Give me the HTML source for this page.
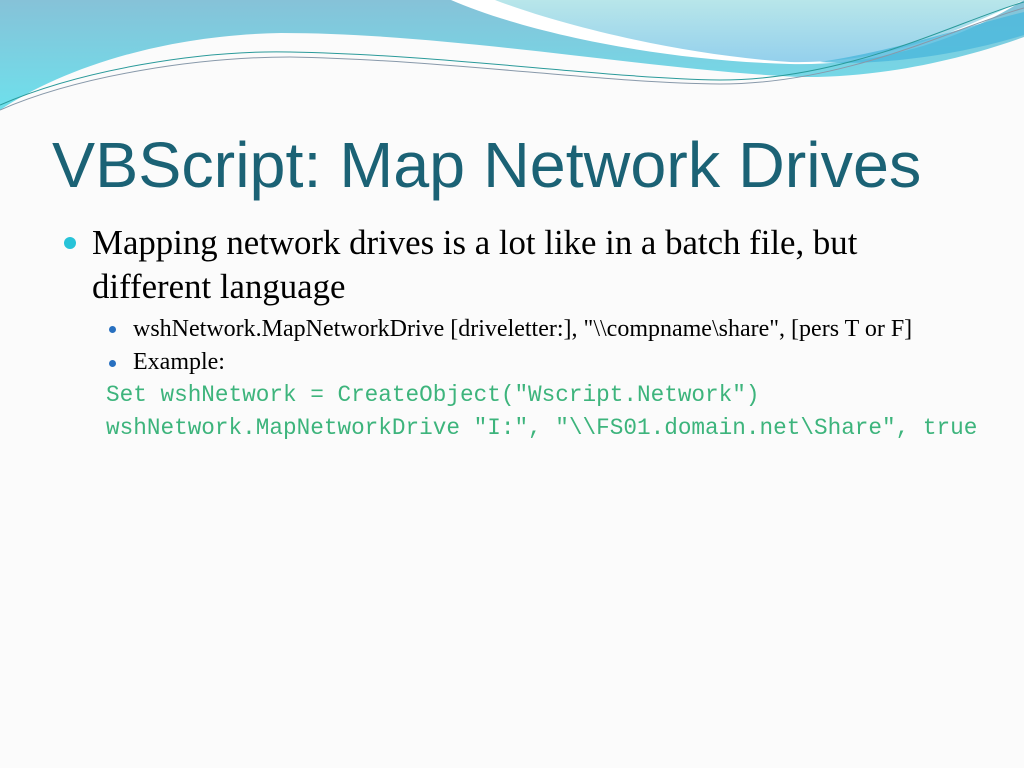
<!DOCTYPE html>
<html><head><meta charset="utf-8"><style>
html,body{margin:0;padding:0;width:1024px;height:768px;overflow:hidden;background:#fbfbfb;position:relative}
.t{position:absolute;white-space:nowrap;transform-origin:0 0}
.title{left:52px;top:128px;font:64px "Liberation Sans",sans-serif;color:#1b6275;transform:scaleX(1.01)}
.b1{left:92px;font:34.8px "Liberation Serif",serif;color:#000}
.b2{left:133px;font:24px "Liberation Serif",serif;color:#000}
.code{left:106px;font:22.7px "Liberation Mono",monospace;color:#3db47c}
.dot{position:absolute;border-radius:50%}
</style></head><body>
<svg width="1024" height="130" style="position:absolute;left:0;top:0">
<defs>
<linearGradient id="g1" x1="0" y1="0" x2="0" y2="1"><stop offset="0" stop-color="#86c2d8"/><stop offset="1" stop-color="#6ee0ec"/></linearGradient>
<linearGradient id="g2" x1="0" y1="0" x2="0" y2="1"><stop offset="0" stop-color="#b8e6ea"/><stop offset="1" stop-color="#94d0ec"/></linearGradient>
</defs>
<path d="M0,0 H1024 V37 C960,60 880,78 800,77 C650,70 450,33 281,33 C160,35 60,70 0,110 Z" fill="url(#g1)"/>
<path d="M451,0 C520,30 650,60 790,64 C880,66 960,40 1024,0 Z" fill="#ffffff"/>
<path d="M495,0 C560,25 680,55 790,62 C880,64 950,35 1024,0 Z" fill="url(#g2)"/>
<path d="M820,62 C900,50 970,25 1024,12 V35 C960,55 880,66 820,62Z" fill="#4bb8dc" opacity="0.8"/>
<path d="M0,105 C80,70 200,50 290,52 C450,55 600,78 720,80 C850,80 960,20 1024,2" stroke="#2a9a9a" stroke-width="1" fill="none"/>
<path d="M0,110 C80,75 200,57 290,57 C450,60 600,83 720,84 C850,84 960,25 1024,8" stroke="#8899aa" stroke-width="1" fill="none"/>
</svg>
<div class="t title">VBScript: Map Network Drives</div>
<div class="dot" style="left:64px;top:237px;width:12px;height:12px;background:#27c3d8"></div>
<div class="t b1" style="top:223px">Mapping network drives is a lot like in a batch file, but</div>
<div class="t b1" style="top:267px">different language</div>
<div class="dot" style="left:109px;top:326px;width:7px;height:7px;background:#2870c0"></div>
<div class="t b2" style="top:316px">wshNetwork.MapNetworkDrive [driveletter:], "\\compname\share", [pers T or F]</div>
<div class="dot" style="left:109px;top:360px;width:7px;height:7px;background:#2870c0"></div>
<div class="t b2" style="top:349px">Example:</div>
<div class="t code" style="top:382px">Set wshNetwork = CreateObject("Wscript.Network")</div>
<div class="t code" style="top:415px">wshNetwork.MapNetworkDrive "I:", "\\FS01.domain.net\Share", true</div>
</body></html>
